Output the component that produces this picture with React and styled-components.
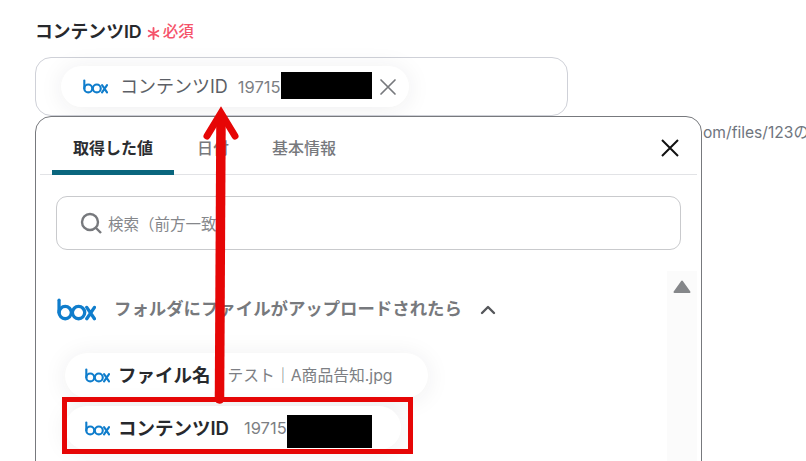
import React from "react";
import styled, { createGlobalStyle } from "styled-components";

const GlobalStyle = createGlobalStyle`
  html, body {
    margin: 0;
    padding: 0;
    background: #fff;
    overflow: hidden;
  }
  body {
    font-family: Inter, "Noto Sans CJK JP", sans-serif;
  }
`;

const Page = styled.div`
  position: relative;
  width: 806px;
  height: 461px;
  overflow: hidden;
  padding: 20px 0 0 35px;
  box-sizing: border-box;
`;

const LabelRow = styled.div`
  display: flex;
  align-items: center;
  height: 22px;
  gap: 5px;
`;

const Label = styled.span`
  font-size: 17.8px;
  line-height: 22px;
  font-weight: 600;
  color: #27292d;
  margin-top: 2px;
`;

const Asterisk = styled.svg`
  width: 13px;
  height: 13px;
  margin-top: 4px;
`;

const Required = styled.span`
  font-size: 15.5px;
  line-height: 22px;
  font-weight: 500;
  color: #f5536a;
  margin-left: -2px;
  margin-top: 2px;
`;

const Field = styled.div`
  width: 533px;
  height: 59px;
  margin-top: 15px;
  box-sizing: border-box;
  border: 1px solid #cfd1d8;
  border-radius: 16px;
  padding: 8px 0 0 25px;
`;

const Chip = styled.div`
  display: flex;
  align-items: center;
  box-sizing: border-box;
  width: ${(p) => p.$width}px;
  height: ${(p) => p.$height}px;
  padding-left: ${(p) => p.$pad}px;
  border-radius: 23px;
  background: #fff;
  box-shadow: 0 2px 24px rgba(40, 40, 50, 0.08);
`;

const ChipName = styled.span`
  font-size: ${(p) => (p.$bold ? 18.5 : 18)}px;
  line-height: 22px;
  font-weight: ${(p) => (p.$bold ? 600 : 400)};
  color: ${(p) => (p.$bold ? "#27292d" : "#5c5f66")};
  margin-left: ${(p) => p.$gap}px;
  margin-top: ${(p) => (p.$bold ? -1 : 1)}px;
  white-space: nowrap;
`;

const ChipValue = styled.span`
  font-size: ${(p) => p.$size}px;
  line-height: 22px;
  color: #7d7f84;
  margin-left: ${(p) => p.$gap}px;
  white-space: nowrap;
`;

const Redacted = styled.span`
  display: inline-block;
  background: #000;
  width: ${(p) => p.$width}px;
  height: ${(p) => p.$height}px;
  margin-top: ${(p) => p.$shift}px;
  flex: none;
`;

const ClearIcon = styled.svg`
  width: 18px;
  height: 18px;
  margin-left: 7px;
`;

const Lower = styled.div`
  display: flex;
  align-items: flex-start;
`;

const Panel = styled.div`
  flex: none;
  box-sizing: border-box;
  width: 667px;
  height: 400px;
  border: 1px solid #77797d;
  border-radius: 16px;
  background: #fff;
  padding: 0 4px;
`;

const Helper = styled.span`
  font-size: 15.6px;
  line-height: 20px;
  color: #6f757e;
  white-space: nowrap;
  margin-top: 7px;
  margin-left: 1px;
`;

const TabBar = styled.div`
  position: relative;
  display: flex;
  height: 57px;
  border-bottom: 1px solid #e2e3e6;
  padding-left: 12px;
`;

const Tab = styled.div`
  width: ${(p) => p.$width}px;
  box-sizing: border-box;
  height: 58px;
  padding-top: 18px;
  text-align: center;
  font-size: 16px;
  font-weight: ${(p) => (p.$active ? 600 : 500)};
  color: ${(p) => (p.$active ? "#2b2d31" : "#77797d")};
  border-bottom: 5px solid ${(p) => (p.$active ? "#0a667e" : "transparent")};
  border-radius: ${(p) => (p.$active ? "5px 5px 0 0" : "0")};
`;

const CloseButton = styled.svg`
  width: 22px;
  height: 22px;
  margin-left: auto;
  margin-top: 20px;
  margin-right: 16px;
`;

const SearchBox = styled.div`
  display: flex;
  align-items: center;
  box-sizing: border-box;
  width: 625px;
  height: 54px;
  margin: 21px 0 0 16px;
  border: 1px solid #c9cacd;
  border-radius: 11px;
  padding-left: 23px;
  gap: 6px;
`;

const SearchIcon = styled.svg`
  width: 22px;
  height: 22px;
`;

const Placeholder = styled.span`
  font-size: 15.5px;
  color: #85878b;
`;

const ListArea = styled.div`
  display: flex;
  margin-top: 21px;
`;

const List = styled.div`
  flex: 1;
  padding-left: 17px;
`;

const GroupHeader = styled.div`
  display: flex;
  align-items: center;
  height: 38px;
  margin-top: 19px;
  gap: 18px;
`;

const GroupTitle = styled.span`
  font-size: 17.4px;
  line-height: 24px;
  font-weight: 600;
  color: #77797d;
  white-space: nowrap;
  margin-top: -1px;
`;

const Chevron = styled.svg`
  width: 18px;
  height: 18px;
  margin-left: -1px;
  margin-top: 1px;
`;

const ChipStack = styled.div`
  display: flex;
  flex-direction: column;
  gap: 8px;
  margin: 25px 0 0 8px;
`;

const Scrollbar = styled.div`
  flex: none;
  width: 30px;
  height: 190px;
  background: #fbfbfb;
  display: flex;
  justify-content: center;
  padding-top: 9px;
  box-sizing: border-box;
`;

const ScrollUp = styled.svg`
  width: 18px;
  height: 14px;
`;

const RedFrame = styled.div`
  position: absolute;
  left: 62px;
  top: 397px;
  width: 351px;
  height: 57px;
  box-sizing: border-box;
  border: 5px solid #e60606;
`;

const ArrowLayer = styled.svg`
  position: absolute;
  left: 190px;
  top: 95px;
  width: 60px;
  height: 320px;
`;

function BoxLogo({ width, height }) {
  return (
    <svg width={width} height={height} viewBox="0 0 38 22" fill="none">
      <g stroke="#0f7dcc" strokeWidth="3.2" strokeLinecap="round">
        <path d="M2 2v12" fill="none" />
        <circle cx="8" cy="14" r="6" />
        <circle cx="21" cy="14" r="6" />
        <path d="M29 9l7.5 11M36.5 9L29 20" />
      </g>
    </svg>
  );
}

export default function App() {
  return (
    <>
      <GlobalStyle />
      <Page>
        <LabelRow>
          <Label>コンテンツID</Label>
          <Asterisk viewBox="0 0 14 14">
            <path
              d="M7 1v12M1.8 4l10.4 6M12.2 4L1.8 10"
              stroke="#f5536a"
              strokeWidth="2"
              strokeLinecap="round"
            />
          </Asterisk>
          <Required>必須</Required>
        </LabelRow>
        <Field>
          <Chip $width={348} $height={41} $pad={22}>
            <BoxLogo width={25} height={15} />
            <ChipName $gap={12}>コンテンツID</ChipName>
            <ChipValue $gap={10} $size={16.5}>19715</ChipValue>
            <Redacted $width={91} $height={27} $shift={-2} />
            <ClearIcon viewBox="0 0 18 18">
              <path
                d="M2 2l14 14M16 2L2 16"
                stroke="#77797d"
                strokeWidth="1.7"
                strokeLinecap="round"
              />
            </ClearIcon>
          </Chip>
        </Field>
        <Lower>
          <Panel>
            <TabBar>
              <Tab $active $width={122}>取得した値</Tab>
              <Tab $width={78}>日付</Tab>
              <Tab $width={104}>基本情報</Tab>
              <CloseButton viewBox="0 0 22 22">
                <path
                  d="M3 3l16 16M19 3L3 19"
                  stroke="#111"
                  strokeWidth="2"
                />
              </CloseButton>
            </TabBar>
            <SearchBox>
              <SearchIcon viewBox="0 0 22 22" fill="none">
                <circle cx="10" cy="10" r="8" stroke="#77797d" strokeWidth="2.4" />
                <path d="M16 16l5 5" stroke="#77797d" strokeWidth="2.4" />
              </SearchIcon>
              <Placeholder>検索（前方一致）</Placeholder>
            </SearchBox>
            <ListArea>
              <List>
                <GroupHeader>
                  <BoxLogo width={39} height={23} />
                  <GroupTitle>フォルダにファイルがアップロードされたら</GroupTitle>
                  <Chevron viewBox="0 0 18 18" fill="none">
                    <path
                      d="M3 12l6-6 6 6"
                      stroke="#55575b"
                      strokeWidth="2.4"
                      strokeLinecap="round"
                      strokeLinejoin="round"
                    />
                  </Chevron>
                </GroupHeader>
                <ChipStack>
                  <Chip $width={363} $height={45} $pad={20}>
                    <BoxLogo width={25} height={15} />
                    <ChipName $bold $gap={8}>ファイル名</ChipName>
                    <ChipValue $gap={17} $size={15.8}>テスト｜A商品告知.jpg</ChipValue>
                  </Chip>
                  <Chip $width={336} $height={44} $pad={20}>
                    <BoxLogo width={25} height={15} />
                    <ChipName $bold $gap={8}>コンテンツID</ChipName>
                    <ChipValue $gap={15} $size={16.5}>19715</ChipValue>
                    <Redacted $width={85} $height={33} $shift={7} />
                  </Chip>
                </ChipStack>
              </List>
              <Scrollbar>
                <ScrollUp viewBox="0 0 18 14">
                  <path
                    d="M9 1.5L16.5 12H1.5Z"
                    fill="#85878a"
                    stroke="#85878a"
                    strokeWidth="2"
                    strokeLinejoin="round"
                  />
                </ScrollUp>
              </Scrollbar>
            </ListArea>
          </Panel>
          <Helper>om/files/123の</Helper>
        </Lower>
        <RedFrame />
        <ArrowLayer viewBox="0 0 60 320">
          <path
            d="M29.5 304L31 24"
            stroke="#e60606"
            strokeWidth="9.5"
            strokeLinecap="round"
          />
          <path
            d="M17 41L31 18L45 41"
            fill="none"
            stroke="#e60606"
            strokeWidth="7"
            strokeLinecap="round"
            strokeLinejoin="miter"
          />
        </ArrowLayer>
      </Page>
    </>
  );
}
